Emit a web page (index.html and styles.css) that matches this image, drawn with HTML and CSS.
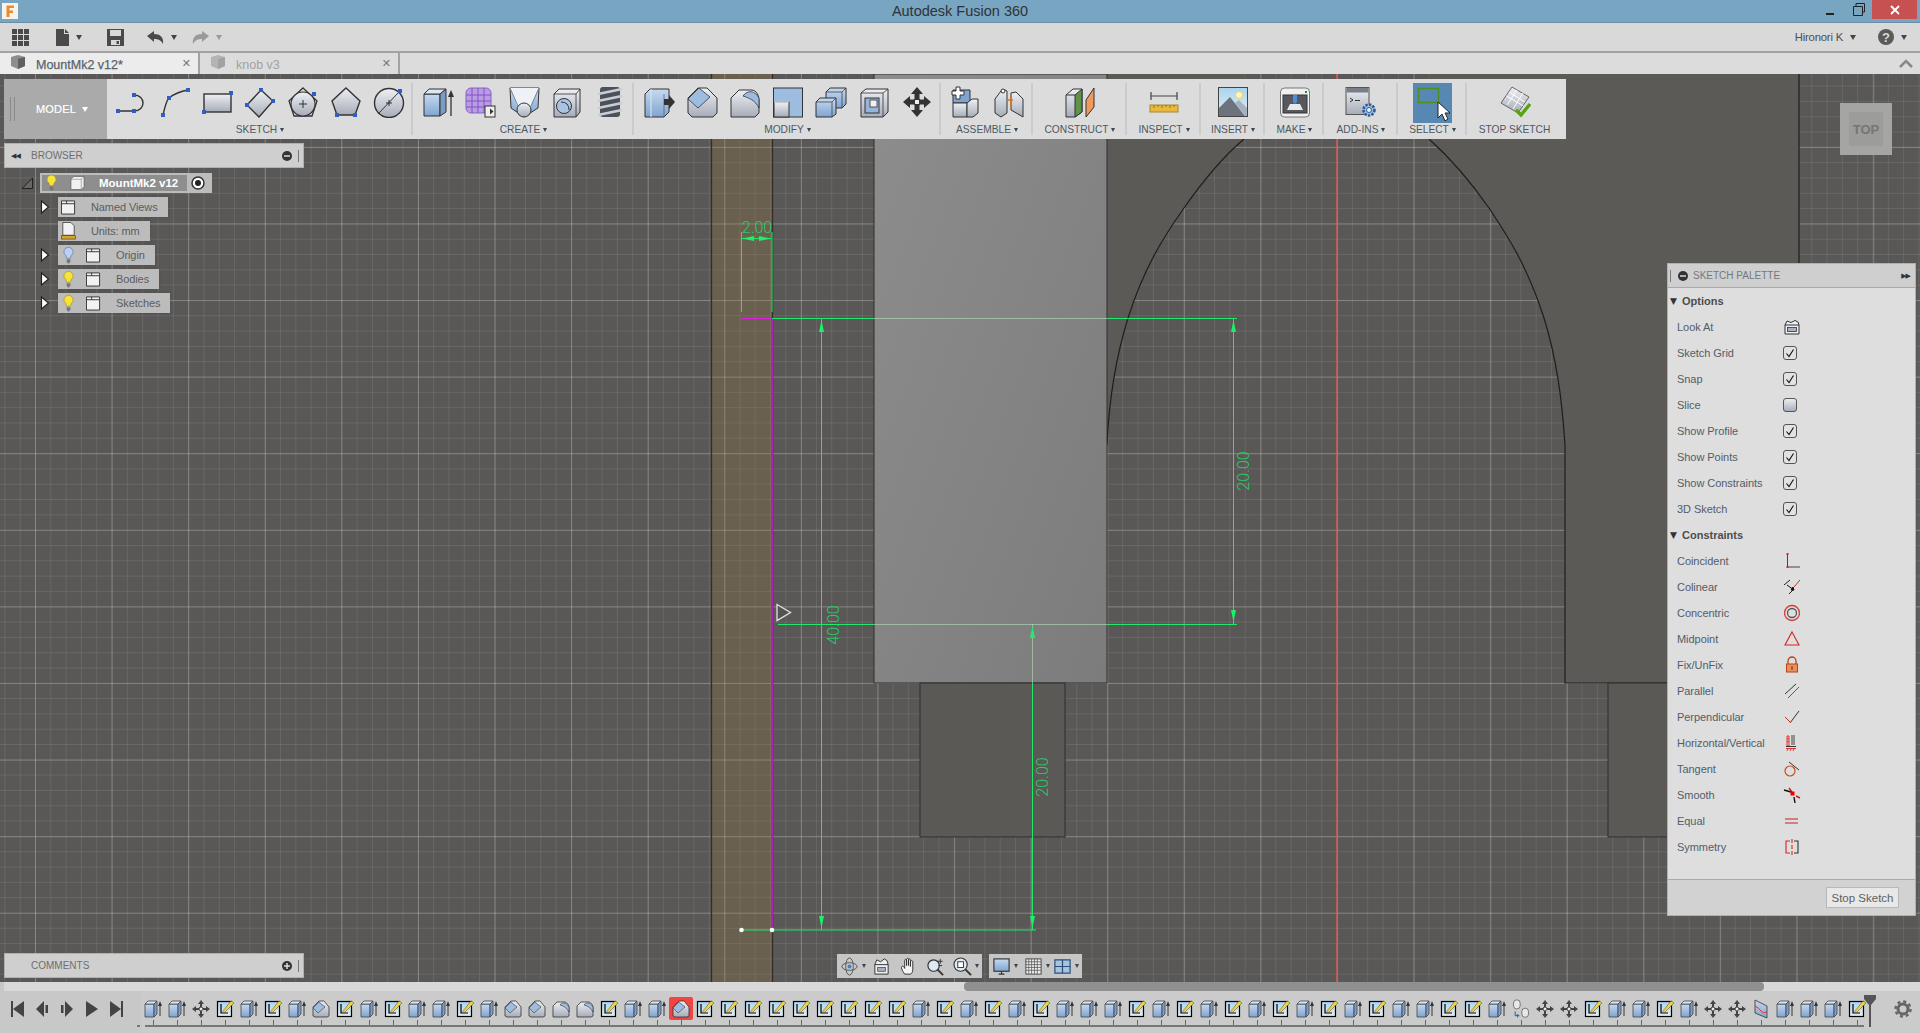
FILE: index.html
```html
<!DOCTYPE html>
<html lang="en">
<head>
<meta charset="utf-8">
<title>Autodesk Fusion 360</title>
<link rel="stylesheet" href="styles.css">
</head>
<body>
<svg class="sprite" xmlns="http://www.w3.org/2000/svg">
<defs>
<linearGradient id="gb" x1="0" y1="0" x2="0" y2="1"><stop offset="0" stop-color="#c6daf0"/><stop offset="1" stop-color="#7fa4d0"/></linearGradient>
<linearGradient id="gg" x1="0" y1="0" x2="0" y2="1"><stop offset="0" stop-color="#eef0f4"/><stop offset="1" stop-color="#a6acb8"/></linearGradient>
<linearGradient id="gd" x1="0" y1="0" x2="1" y2="1"><stop offset="0" stop-color="#8d8d8d"/><stop offset="1" stop-color="#7c7c7c"/></linearGradient>
<linearGradient id="gs" x1="0" y1="0" x2="0" y2="1"><stop offset="0" stop-color="#a9d4ee"/><stop offset="1" stop-color="#e6eef2"/></linearGradient>
<symbol id="i-line" viewBox="0 0 32 32"><path d="M3 25H19C31 25 31 9 19 9" fill="none" stroke="#333" stroke-width="1.4"/><path d="M1 23h4v4H1zM17 23h4v4h-4zM17 7h4v4h-4z" fill="#2f5ec4"/></symbol>
<symbol id="i-arc" viewBox="0 0 32 32"><path d="M5 29C7 20 9 14 11 12C16 8 24 5 30 4" fill="none" stroke="#333" stroke-width="1.4"/><path d="M3 27h4v4H3zM9 10h4v4H9zM28 2h4v4h-4z" fill="#2f5ec4"/></symbol>
<symbol id="i-rect" viewBox="0 0 32 32"><rect x="3" y="8" width="27" height="18" fill="url(#gg)" stroke="#333" stroke-width="1.4"/><path d="M28 5h4v4h-4zM1 24h4v4H1z" fill="#2f5ec4"/></symbol>
<symbol id="i-diamond" viewBox="0 0 32 32"><path d="M17 4L29 15L15 31L3 19Z" fill="url(#gg)" stroke="#333" stroke-width="1.4"/><path d="M15 2h4v4h-4zM27 13h4v4h-4zM1 17h4v4H1z" fill="#2f5ec4"/></symbol>
<symbol id="i-cpoly" viewBox="0 0 32 32"><path d="M16 2L30 15L25 30H7L2 15Z" fill="#dfe3e9" stroke="#333" stroke-width="1.3"/><circle cx="16" cy="18" r="12" fill="url(#gg)" stroke="#333" stroke-width="1.2"/><path d="M12 18h8M16 14v8" stroke="#333"/><path d="M25 6h4v4h-4z" fill="#2f5ec4"/></symbol>
<symbol id="i-pent" viewBox="0 0 32 32"><path d="M16 2L30 15L25 29H7L2 15Z" fill="url(#gg)" stroke="#333" stroke-width="1.4"/><path d="M5 27h4v4H5zM23 27h4v4h-4z" fill="#2f5ec4"/></symbol>
<symbol id="i-cdiam" viewBox="0 0 32 32"><circle cx="16" cy="17" r="14.5" fill="url(#gg)" stroke="#333" stroke-width="1.4"/><path d="M5 28L27 5M13 17h6M16 14v6" stroke="#333"/><path d="M25 3h4v4h-4z" fill="#2f5ec4"/></symbol>
<symbol id="i-ext" viewBox="0 0 32 32"><path d="M2 8H18V30H2Z" fill="url(#gb)" stroke="#333"/><path d="M2 8L7 3H24L18 8Z" fill="#dbe7f4" stroke="#333"/><path d="M18 8L24 3V26L18 30Z" fill="#7a9cc6" stroke="#333"/><path d="M29 30V8" stroke="#333" stroke-width="1.3"/><path d="M26 11L29 4L32 11Z" fill="#333"/></symbol>
<symbol id="i-mesh" viewBox="0 0 32 32"><rect x="1" y="2" width="25" height="25" rx="5" fill="#b99ce4" stroke="#8a62c8"/><path d="M7 2V27M13 2V27M19 2V27M1 9H26M1 15H26M1 21H26" stroke="#7b4fc0" stroke-width=".9"/><rect x="20" y="20" width="10" height="11" fill="#eee" stroke="#333"/><path d="M22 25.500h3v-3l3.500 3-3.500 3v-3h-3z" fill="#333"/></symbol>
<symbol id="i-loft" viewBox="0 0 32 32"><path d="M2 2H31L30 22L16 31L3 22Z" fill="url(#gb)" stroke="#333"/><path d="M2 2L9 20H23L31 2Z" fill="#eef2f6"/><path d="M2 2L10 20M31 2L23 20" stroke="#6d7f96"/><circle cx="16" cy="24" r="7" fill="url(#gg)" stroke="#333"/></symbol>
<symbol id="i-hole" viewBox="0 0 32 32"><path d="M3 8L8 3H29V26L25 31H3Z" fill="url(#gg)" stroke="#333"/><path d="M3 8H25V31M25 8L29 3" fill="none" stroke="#333" stroke-width=".8"/><circle cx="13" cy="20" r="7.500" fill="#a9c4e2" stroke="#333"/><path d="M10 16Q18 16 18 24" fill="none" stroke="#333"/></symbol>
<symbol id="i-thread" viewBox="0 0 32 32"><rect x="6" y="1" width="20" height="30" rx="3" fill="#4c5159"/><path d="M4 8L28 3M4 15L28 10M4 22L28 17M4 29L28 24" stroke="#c9ced6" stroke-width="2.600"/></symbol>
<symbol id="i-press" viewBox="0 0 32 32"><path d="M2 8L7 3H26V26L21 31H2Z" fill="url(#gb)" stroke="#333"/><path d="M8 3V31" stroke="#dfe9f5"/><path d="M21 8V31" stroke="#557" stroke-width=".7"/><path d="M21 13h5v-4l6 7-6 7v-4h-5z" fill="#333"/></symbol>
<symbol id="i-chamfer" viewBox="0 0 32 32"><path d="M2 12L12 2H21L31 12V27L27 31H6L2 27Z" fill="url(#gg)" stroke="#333"/><path d="M2 13L13 2L24 11L12 22Z" fill="#9dbde0" stroke="#333" stroke-width=".8"/></symbol>
<symbol id="i-fillet" viewBox="0 0 32 32"><path d="M2 12L10 4H22C28 4 30 10 30 15V27L26 31H2Z" fill="url(#gg)" stroke="#333"/><path d="M14 10C18 4 26 4 30 12V22C26 14 20 12 14 10Z" fill="#9dbde0" stroke="#333" stroke-width=".8"/></symbol>
<symbol id="i-combine" viewBox="0 0 32 32"><rect x="1.500" y="2" width="29" height="29" fill="#9dbde0" stroke="#333"/><rect x="2" y="16" width="15" height="15" fill="url(#gg)" stroke="#333"/><path d="M2 16H17" stroke="#fff"/></symbol>
<symbol id="i-offset" viewBox="0 0 32 32"><path d="M11 6L15 2H31V18L27 22H11Z" fill="url(#gb)" stroke="#333"/><path d="M1 16L5 12H21V28L17 31H1Z" fill="url(#gb)" stroke="#333"/><path d="M1 16H17V31M17 16L21 12M11 6H27V22M27 6L31 2" fill="none" stroke="#333" stroke-width=".7"/></symbol>
<symbol id="i-shell" viewBox="0 0 32 32"><path d="M3 7L8 3H30V26L25 31H3Z" fill="url(#gg)" stroke="#333"/><path d="M3 7H25V31M25 7L30 3" fill="none" stroke="#333" stroke-width=".8"/><rect x="7" y="12" width="14" height="15" fill="#95b5da" stroke="#333"/><rect x="12" y="14" width="7" height="7" fill="#eef0f4" stroke="#333" stroke-width=".8"/></symbol>
<symbol id="i-move" viewBox="0 0 32 32"><g fill="#333"><path d="M16 1l6 7h-3.500v5h-5V8H10zM16 31l6-7h-3.500v-5h-5v5H10zM2 16l7-6v3.500h4v5H9V22zM30 16l-7-6v3.500h-4v5h4V22z"/></g><rect x="13.500" y="13.500" width="5" height="5" fill="#eee" stroke="#333"/></symbol>
<symbol id="i-new" viewBox="0 0 32 32"><path d="M3 4H20V17H3Z" fill="#7fa4d0" stroke="#333"/><path d="M3 17H17V31H3Z" fill="url(#gg)" stroke="#333"/><path d="M17 17L22 13H28V27L23 31H17Z" fill="url(#gg)" stroke="#333"/><path d="M2 5h4V1h4v4h4v4h-4v4H6V9H2z" fill="#fff" stroke="#333"/></symbol>
<symbol id="i-joint" viewBox="0 0 32 32"><path d="M2 13L8 5Q11 2 14 5V27L8 31L2 27Z" fill="url(#gg)" stroke="#333"/><path d="M18 7L23 6L30 13V31L25 28L18 24Z" fill="url(#gg)" stroke="#333"/><circle cx="10" cy="5" r="2" fill="#fff" stroke="#333"/><path d="M18 9V22M14 14H20" stroke="#d9751e" stroke-width="1.400"/></symbol>
<symbol id="i-cons" viewBox="0 0 32 32"><path d="M2 9L9 3H18V26L11 31H2Z" fill="url(#gg)" stroke="#333"/><path d="M11 9V31L18 26V3Z" fill="#5f9348" stroke="#333"/><path d="M2 9H11" stroke="#333"/><path d="M22 14L30 2V21L22 31Z" fill="#ee9a5a" stroke="#333"/></symbol>
<symbol id="i-ruler" viewBox="0 0 32 32"><path d="M3 10H29M3 6V14M29 6V14" fill="none" stroke="#444" stroke-width="1.200"/><rect x="2" y="19" width="28" height="7" fill="#e8b93c" stroke="#a8862a"/><path d="M6 19v3M10 19v2M14 19v3M18 19v2M22 19v3M26 19v2" stroke="#7a5f1c" stroke-width=".8"/></symbol>
<symbol id="i-pic" viewBox="0 0 32 32"><rect x="1.500" y="1.500" width="29" height="29" fill="url(#gs)" stroke="#444"/><circle cx="22" cy="9" r="3.500" fill="#fff6b8" stroke="#e8d272"/><path d="M2 30V22L13 11L28 30Z" fill="#6c737e"/><path d="M18 17L22 14L30 22V30H28Z" fill="#a8b2bf"/></symbol>
<symbol id="i-make" viewBox="0 0 32 32"><rect x="1.500" y="2" width="29" height="29" rx="4" fill="#f0f0f0" stroke="#777"/><rect x="4" y="9" width="24" height="18" fill="#55595f" stroke="#333"/><path d="M8 24L11 18H21L24 24Z" fill="#e8e8e8"/><path d="M14 9h4v7l-2 2-2-2z" fill="#4a90e0"/><rect x="26" y="5" width="2" height="2" fill="#1b9a2b"/></symbol>
<symbol id="i-addin" viewBox="0 0 32 32"><rect x="1" y="1.500" width="23" height="27" fill="url(#gg)" stroke="#555"/><rect x="1.500" y="2" width="22" height="4.500" fill="#777f8a"/><path d="M5 12l3 2-3 2M10 14.500h5" fill="none" stroke="#333"/><circle cx="24" cy="24" r="5.500" fill="#9dbde0" stroke="#2d5a94" stroke-width="2.500" stroke-dasharray="2.400 1.200"/><circle cx="24" cy="24" r="2.500" fill="#eef3f8" stroke="#2d5a94"/></symbol>
<symbol id="i-sel" viewBox="0 0 40 40"><rect x="5.500" y="5.500" width="20" height="14" fill="none" stroke="#4f8f1a" stroke-width="1.500"/><path d="M25 19V35L29 31L32 38L35 36L32 30H37Z" fill="#fff" stroke="#222" stroke-width="1"/></symbol>
<symbol id="i-stop" viewBox="0 0 32 32"><path d="M13 1L30 11L19 27L2 17Z" fill="url(#gg)" stroke="#666"/><path d="M7.500 10L24.500 20M10 6L26 16M18 4L8 19M24 7L14 23" stroke="#fff" stroke-width="1"/><path d="M17 24L22 29L31 18" fill="none" stroke="#57a312" stroke-width="3.400"/></symbol>
<symbol id="b-on" viewBox="0 0 12 20"><path d="M6 1a5 5 0 0 1 3 9l-1 3H4l-1-3a5 5 0 0 1 3-9z" fill="#f7e33a" stroke="#9a8c30" stroke-width=".7"/><path d="M4 14h4v3l-2 2-2-2z" fill="#777"/></symbol>
<symbol id="b-off" viewBox="0 0 12 20"><path d="M6 1a5 5 0 0 1 3 9l-1 3H4l-1-3a5 5 0 0 1 3-9z" fill="#bcd0f4" stroke="#5a6f9a" stroke-width=".7"/><path d="M4 14h4v3l-2 2-2-2z" fill="#777"/></symbol>
<symbol id="f" viewBox="0 0 16 16"><path d="M.5 1.500h14v14H.5z" fill="#f2f2f2" stroke="#333"/><path d="M.5 4.500h14M6 1.500v3" stroke="#333"/></symbol>
<symbol id="exp" viewBox="0 0 10 14"><path d="M1.500 1L8.500 7L1.500 13Z" fill="#fff" stroke="#222" stroke-width="1.200"/></symbol>
<symbol id="chk" viewBox="0 0 14 14"><rect x=".5" y=".5" width="13" height="13" rx="2.500" fill="#e2e2e2" stroke="#555"/><path d="M3.500 7.500L6 10.500L10.500 3.500" fill="none" stroke="#111" stroke-width="1.100"/></symbol>
<symbol id="t-e" viewBox="0 0 20 20"><path d="M2 5H11V18H2Z" fill="url(#gb)" stroke="#444" stroke-width=".8"/><path d="M2 5L5 2H14L11 5Z" fill="#dbe7f4" stroke="#444" stroke-width=".8"/><path d="M11 5L14 2V15L11 18Z" fill="#7a9cc6" stroke="#444" stroke-width=".8"/><path d="M17 17V5" stroke="#333"/><path d="M15 7L17 2L19 7Z" fill="#333"/></symbol>
<symbol id="t-s" viewBox="0 0 20 20"><rect x="2.500" y="2.500" width="14" height="15" fill="url(#gs)" stroke="#000" stroke-width="1.200"/><path d="M6 5V14H13" fill="none" stroke="#000" stroke-width="1.200"/><path d="M8 12L16 2L19 4L10 13L7.500 14Z" fill="#f4d432" stroke="#444" stroke-width=".5"/></symbol>
<symbol id="t-m" viewBox="0 0 20 20"><path d="M10 1l3 4h-2v3H9V5H7zM10 19l3-4h-2v-3H9v3H7zM1 10l4-3v2h3v2H5v2zM19 10l-4-3v2h-3v2h3v2z" fill="#444"/><rect x="8.500" y="8.500" width="3" height="3" fill="#eee" stroke="#444" stroke-width=".7"/></symbol>
<symbol id="t-c" viewBox="0 0 20 20"><path d="M2 8L8 2H13L18 8V17L16 18H4L2 17Z" fill="url(#gg)" stroke="#333" stroke-width=".8"/><path d="M2 9L8 3L14 8L7 14Z" fill="#9dbde0" stroke="#333" stroke-width=".6"/></symbol>
<symbol id="t-f" viewBox="0 0 20 20"><path d="M2 7L6 3H13C16 3 18 6 18 9V17L16 18H2Z" fill="url(#gg)" stroke="#333" stroke-width=".8"/><path d="M9 6C11 3 15 3 18 8V13C16 9 13 7 9 6Z" fill="#9dbde0" stroke="#333" stroke-width=".6"/></symbol>
<symbol id="t-j" viewBox="0 0 20 24"><rect x="1" y="1" width="8" height="11" rx="4" fill="#e8e8e8" stroke="#444" stroke-width=".8"/><rect x="11" y="11" width="8" height="11" rx="4" fill="#e8e8e8" stroke="#444" stroke-width=".8"/><path d="M3 15v5h5M6 18v4" fill="none" stroke="#1e5fa8" stroke-width="1.200"/></symbol>
<symbol id="t-p" viewBox="0 0 20 20"><path d="M4 1L16 7V19L4 14Z" fill="url(#gb)" stroke="#333" stroke-width=".8"/><path d="M4 7Q8 9 10 12T16 13" fill="none" stroke="#d8382e" stroke-width="1"/></symbol>
</defs>
</svg>

<header class="titlebar">
  <svg class="logo" viewBox="0 0 16 16"><rect width="16" height="16" fill="#f6f3ec"/><path d="M4.500 2.500H12V5H7.500V7.500H11V10H7.500V14H4.500Z" fill="#e98b2a"/></svg>
  <div class="apptitle">Autodesk Fusion 360</div>
  <div class="winctl">
    <svg class="wbtn" viewBox="0 0 26 20"><path d="M6 14H14" stroke="#222" stroke-width="2"/></svg>
    <svg class="wbtn" viewBox="0 0 26 20"><path d="M7.500 6.500h9v9h-9z" fill="none" stroke="#222"/><path d="M10 6V3.500h8.500V12H16.500" fill="none" stroke="#222"/></svg>
    <div class="wclose"><svg class="wx" viewBox="0 0 10 10"><path d="M1 1L9 9M9 1L1 9" stroke="#fff" stroke-width="1.800"/></svg></div>
  </div>
</header>

<div class="menubar">
  <svg class="mi m-grid" viewBox="0 0 17 17"><path d="M0 0h5v5H0zM6 0h5v5H6zM12 0h5v5h-5zM0 6h5v5H0zM6 6h5v5H6zM12 6h5v5h-5zM0 12h5v5H0zM6 12h5v5H6zM12 12h5v5h-5z" fill="#4a4a4a"/></svg>
  <svg class="mi m-file" viewBox="0 0 14 17"><path d="M0 0H8V5H13V17H0ZM9 0L13 4H9Z" fill="#4a4a4a"/></svg>
  <span class="caret c-file"></span>
  <svg class="mi m-save" viewBox="0 0 17 17"><path d="M0 0H17V17H0Z" fill="#4a4a4a"/><path d="M3 1H14V7H3Z" fill="#d8d8d8"/><path d="M4 11H13V16H4Z" fill="#d8d8d8"/><path d="M9.500 12H12V15H9.500Z" fill="#4a4a4a"/></svg>
  <svg class="mi m-undo" viewBox="0 0 17 13"><path d="M0 5L7 0V3C13 3 17 6 16 13C14 9 11 8 7 8V11Z" fill="#4a4a4a"/></svg>
  <span class="caret c-undo"></span>
  <svg class="mi m-redo" viewBox="0 0 17 13"><path d="M17 5L10 0V3C4 3 0 6 1 13C3 9 6 8 10 8V11Z" fill="#9a9a9a"/></svg>
  <span class="caret faded c-redo"></span>
  <span class="user">Hironori K</span>
  <span class="caret c-user"></span>
  <svg class="mi m-help" viewBox="0 0 16 16"><circle cx="8" cy="8" r="8" fill="#5a5a5a"/><text x="8" y="12.500" class="helpq">?</text></svg>
  <span class="caret c-help"></span>
</div>

<nav class="tabs">
  <div class="tab active">
    <svg class="tabcube" viewBox="0 0 16 16"><path d="M1 3L8 1L15 3V12L8 15L1 12Z" fill="#8d8d8d"/><path d="M8 5V15L15 12V3Z" fill="#5f5f5f"/></svg>
    <span class="tablabel">MountMk2 v12*</span>
    <span class="tabx">✕</span>
  </div>
  <div class="tab inactive">
    <svg class="tabcube" viewBox="0 0 16 16"><path d="M1 3L8 1L15 3V12L8 15L1 12Z" fill="#b4b4b4"/><path d="M8 5V15L15 12V3Z" fill="#a2a2a2"/></svg>
    <span class="tablabel">knob v3</span>
    <span class="tabx">✕</span>
  </div>
  <div class="tabrest"><svg class="chev" viewBox="0 0 14 9"><path d="M1 8L7 2L13 8" fill="none" stroke="#888" stroke-width="2.600"/></svg></div>
</nav>

<main class="canvas">
  <svg class="scene" viewBox="0 74 1920 908">
    <rect x="711" y="74" width="61" height="908" fill="#a07840" fill-opacity=".24"/>
    <path d="M711.500 74V982M772.500 74V982" stroke="#352f28" stroke-width="1.300"/>
    <path d="M1336.500 74V982" stroke="#b85a5a"/>
    <path d="M1107 74V445C1109 400 1115 360 1128 318C1145 265 1165 235 1184 208C1205 178 1225 155 1244 139V74H1429V139C1447 155 1468 178 1489 208C1507 235 1527 265 1544 318C1557 360 1562 400 1565 445V683H1799V74Z" fill="#5b5a57"/>
    <path d="M1107 445C1109 400 1115 360 1128 318C1145 265 1165 235 1184 208C1205 178 1225 155 1244 139M1429 139C1447 155 1468 178 1489 208C1507 235 1527 265 1544 318C1557 360 1562 400 1565 445V683H1799V74" fill="none" stroke="#1e1e1e" stroke-width="1.200"/>
    <rect x="874" y="74" width="233" height="609" fill="url(#gd)" stroke="#2e2e2e"/>
    <rect x="920" y="683" width="145" height="154" fill="#5a5956" stroke="#2e2e2e"/>
    <rect x="1608" y="683" width="70" height="154" fill="#5a5956" stroke="#2e2e2e"/>

    <path d="M741.500 318V930" stroke="#d020d0" stroke-opacity=".4"/>
    <path d="M741 318.500H772" stroke="#e020e0" stroke-width="1.300"/>
    <path d="M772 318V930" stroke="#b020b8" stroke-width="2"/>

    <g class="dim">
      <path d="M741.500 232V312M772 232V312"/>
      <path d="M742 238.500H771"/>
      <path d="M772 318.500H874M1107 318.500H1237M778 624.500H874M1107 624.500H1237"/>
      <path d="M821.500 318V930M1233.500 318V624"/>
      <path d="M1032.500 683V930M741 930H1036"/>
    </g>
    <path class="dimfade" d="M874 318.500H1107M874 624.500H1107M1032.500 624V683"/>
    <g class="arrow">
      <path d="M742 238.500L754 236V241ZM771 238.500L759 236V241Z"/>
      <path d="M821.500 320L819 332H824ZM821.500 928L819 916H824Z"/>
      <path d="M1233.500 320L1231 332H1236ZM1233.500 622L1231 610H1236Z"/>
      <path d="M1032.500 626L1030 638H1035ZM1032.500 928L1030 916H1035Z"/>
    </g>
    <circle cx="741.500" cy="930" r="2.300" fill="#fff"/><circle cx="772" cy="930" r="2.300" fill="#fff"/>
    <path d="M777 604.500L790.500 612.500L777 620.500Z" fill="#55534f" stroke="#e4e4e4" stroke-width="1.300"/>
    <text class="dimtext" x="757" y="233">2.00</text>
    <text class="dimtext" transform="translate(1249 471) rotate(-90)" x="0" y="0">20.00</text>
    <text class="dimtext" transform="translate(839 625) rotate(-90)" x="0" y="0">40.00</text>
    <text class="dimtext" transform="translate(1048 777) rotate(-90)" x="0" y="0">20.00</text>
  </svg>

  <section class="toolbar">
    <div class="modelbtn"><span class="grip"></span><span class="modeltxt">MODEL</span><span class="caret white"></span></div>
    <div class="tg w-sketch"><div class="ticons"><svg class="ic"><use href="#i-line"/></svg><svg class="ic"><use href="#i-arc"/></svg><svg class="ic"><use href="#i-rect"/></svg><svg class="ic"><use href="#i-diamond"/></svg><svg class="ic"><use href="#i-cpoly"/></svg><svg class="ic"><use href="#i-pent"/></svg><svg class="ic"><use href="#i-cdiam"/></svg></div><div class="tlabel">SKETCH<span class="caret sm"></span></div></div>
    <div class="tg w-create"><div class="ticons"><svg class="ic"><use href="#i-ext"/></svg><svg class="ic"><use href="#i-mesh"/></svg><svg class="ic"><use href="#i-loft"/></svg><svg class="ic"><use href="#i-hole"/></svg><svg class="ic"><use href="#i-thread"/></svg></div><div class="tlabel">CREATE<span class="caret sm"></span></div></div>
    <div class="tg w-modify"><div class="ticons"><svg class="ic"><use href="#i-press"/></svg><svg class="ic"><use href="#i-chamfer"/></svg><svg class="ic"><use href="#i-fillet"/></svg><svg class="ic"><use href="#i-combine"/></svg><svg class="ic"><use href="#i-offset"/></svg><svg class="ic"><use href="#i-shell"/></svg><svg class="ic"><use href="#i-move"/></svg></div><div class="tlabel">MODIFY<span class="caret sm"></span></div></div>
    <div class="tg w-assemble"><div class="ticons"><svg class="ic"><use href="#i-new"/></svg><svg class="ic"><use href="#i-joint"/></svg></div><div class="tlabel">ASSEMBLE<span class="caret sm"></span></div></div>
    <div class="tg w-construct"><div class="ticons"><svg class="ic"><use href="#i-cons"/></svg></div><div class="tlabel">CONSTRUCT<span class="caret sm"></span></div></div>
    <div class="tg w-inspect"><div class="ticons"><svg class="ic"><use href="#i-ruler"/></svg></div><div class="tlabel">INSPECT<span class="caret sm"></span></div></div>
    <div class="tg w-insert"><div class="ticons"><svg class="ic"><use href="#i-pic"/></svg></div><div class="tlabel">INSERT<span class="caret sm"></span></div></div>
    <div class="tg w-make"><div class="ticons"><svg class="ic"><use href="#i-make"/></svg></div><div class="tlabel">MAKE<span class="caret sm"></span></div></div>
    <div class="tg w-addins"><div class="ticons"><svg class="ic"><use href="#i-addin"/></svg></div><div class="tlabel">ADD-INS<span class="caret sm"></span></div></div>
    <div class="tg w-select"><div class="ticons"><div class="selbtn"><svg class="selic"><use href="#i-sel"/></svg></div></div><div class="tlabel">SELECT<span class="caret sm"></span></div></div>
    <div class="tg w-stop"><div class="ticons"><svg class="ic"><use href="#i-stop"/></svg></div><div class="tlabel">STOP SKETCH</div></div>
  </section>

  <section class="panel browser">
    <span class="rew">◀◀</span><span class="ptitle">BROWSER</span>
    <svg class="pm" viewBox="0 0 10 10"><circle cx="5" cy="5" r="5" fill="#333"/><path d="M2 5H8" stroke="#ddd" stroke-width="1.500"/></svg><span class="vgrip"></span>
  </section>

  <section class="tree">
    <div class="row rootrow">
      <svg class="rootexp" viewBox="0 0 12 12"><path d="M11.500 1V11.500H1Z" fill="#666" stroke="#222"/></svg>
      <div class="rootnode">
        <div class="rootinner">
          <svg class="bulb"><use href="#b-on"/></svg>
          <svg class="cube" viewBox="0 0 16 16"><path d="M1 4L4 1H15V12L12 15H1Z" fill="#f1f1f1" stroke="#555" stroke-width=".7"/><path d="M1 4H12V15M12 4L15 1" fill="none" stroke="#888" stroke-width=".7"/></svg>
          <span class="rootname">MountMk2 v12</span>
        </div>
        <svg class="radio" viewBox="0 0 14 14"><circle cx="7" cy="7" r="6" fill="#fff" stroke="#333" stroke-width="1.500"/><circle cx="7" cy="7" r="3" fill="#222"/></svg>
      </div>
    </div>
    <div class="row"><svg class="exp"><use href="#exp"/></svg><div class="node"><svg class="fold nv"><use href="#f"/></svg><span>Named Views</span></div></div>
    <div class="row"><span class="exp"></span><div class="node"><svg class="doc" viewBox="0 0 15 19"><path d="M1.500 .5H10L13.500 4V14H1.500Z" fill="#f2f2f2" stroke="#333" stroke-width=".8"/><rect x="0" y="14.500" width="15" height="3.500" fill="#d9a52a" stroke="#333" stroke-width=".6"/></svg><span>Units: mm</span></div></div>
    <div class="row"><svg class="exp"><use href="#exp"/></svg><div class="node bn"><svg class="bulb"><use href="#b-off"/></svg><svg class="fold"><use href="#f"/></svg><span>Origin</span></div></div>
    <div class="row"><svg class="exp"><use href="#exp"/></svg><div class="node bn"><svg class="bulb"><use href="#b-on"/></svg><svg class="fold"><use href="#f"/></svg><span>Bodies</span></div></div>
    <div class="row"><svg class="exp"><use href="#exp"/></svg><div class="node bn"><svg class="bulb"><use href="#b-on"/></svg><svg class="fold"><use href="#f"/></svg><span>Sketches</span></div></div>
  </section>

  <section class="panel comments">
    <span class="ptitle">COMMENTS</span>
    <svg class="pm" viewBox="0 0 10 10"><circle cx="5" cy="5" r="5" fill="#333"/><path d="M2 5H8M5 2V8" stroke="#ddd" stroke-width="1.500"/></svg><span class="vgrip"></span>
  </section>

  <div class="navbar">
    <div class="navgroup ng1">
      <svg class="nv-i" viewBox="0 0 20 20"><ellipse cx="10" cy="10" rx="8" ry="4" fill="none" stroke="#555"/><ellipse cx="10" cy="10" rx="4" ry="9" fill="none" stroke="#555"/><circle cx="10" cy="10" r="2" fill="#3d7fd0"/></svg><span class="caret sm"></span>
      <svg class="nv-i gapf" viewBox="0 0 20 20"><path d="M3 8H17V18H3ZM3 8L5 3L9 5L13 2L16 4L17 8" fill="#eee" stroke="#333"/><rect x="6" y="11" width="8" height="4" fill="#a6b2c4" stroke="#333" stroke-width=".7"/></svg>
      <svg class="nv-i gapl" viewBox="0 0 20 20"><path d="M6 18C3 14 2 11 3 10C4 9 5 10 6 12V4C6 2 8 2 8 4V9V2.500C8 1 10 1 10 2.500V9V3C10 1.500 12 1.500 12 3V10V5C12 3.500 14.500 3.500 14.500 5V13C14.500 16 13 18 12 18Z" fill="#f4f4f4" stroke="#333"/></svg>
      <svg class="nv-i gapl" viewBox="0 0 20 20"><circle cx="8" cy="9" r="6" fill="#dfe9f4" stroke="#333" stroke-width="1.200"/><path d="M12 13L18 19" stroke="#333" stroke-width="2"/><path d="M15 2v5M12.500 4.500h5M13 9h4" stroke="#333"/></svg>
      <svg class="nv-i gapl" viewBox="0 0 20 20"><circle cx="8" cy="8" r="7" fill="#dfe9f4" stroke="#333" stroke-width="1.200"/><rect x="5" y="5" width="6" height="6" fill="#fff" stroke="#333"/><path d="M13 13L19 19" stroke="#333" stroke-width="2"/></svg><span class="caret sm"></span>
    </div>
    <div class="navgroup ng2">
      <svg class="nv-i" viewBox="0 0 20 20"><rect x="2" y="2" width="16" height="13" fill="url(#gb)" stroke="#333" stroke-width="1.200"/><path d="M7 18H13M10 15V18" stroke="#333" stroke-width="1.200"/></svg><span class="caret sm"></span>
      <svg class="nv-i gapm" viewBox="0 0 20 20"><rect x="2" y="2" width="16" height="16" fill="#eee" stroke="#444"/><path d="M5 2V18M8 2V18M11 2V18M14 2V18M2 5H18M2 8H18M2 11H18M2 14H18" stroke="#555" stroke-width=".8"/></svg><span class="caret sm"></span>
      <svg class="nv-i gaps" viewBox="0 0 20 20"><path d="M2 3H18V17H2Z" fill="#a6c3e2" stroke="#2f4f7a" stroke-width="1.300"/><path d="M10 3V17M2 10H18" stroke="#2f4f7a" stroke-width="1.300"/></svg><span class="caret sm"></span>
    </div>
  </div>

  <aside class="viewcube"><div class="vcface">TOP</div></aside>

  <aside class="palette">
    <div class="phead"><span class="vgrip"></span><svg class="pm2" viewBox="0 0 10 10"><circle cx="5" cy="5" r="5" fill="#333"/><path d="M2 5H8" stroke="#ddd" stroke-width="1.500"/></svg><span class="ptitle2">SKETCH PALETTE</span><span class="ff">▶▶</span></div>
    <div class="pbody">
      <div class="psec"><span class="tri">▼</span>Options</div>
      <div class="prow"><span class="plabel">Look At</span><svg class="pic" viewBox="0 0 18 18"><path d="M2 7H16V16H2ZM2 7L4 3L8 4.500L12 2.500L15 4L16 7" fill="#eee" stroke="#333"/><rect x="4.500" y="9.500" width="9" height="4" fill="#a6b2c4" stroke="#333" stroke-width=".8"/></svg></div>
      <div class="prow"><span class="plabel">Sketch Grid</span><svg class="pchk"><use href="#chk"/></svg></div>
      <div class="prow"><span class="plabel">Snap</span><svg class="pchk"><use href="#chk"/></svg></div>
      <div class="prow"><span class="plabel">Slice</span><svg class="pchk" viewBox="0 0 14 14"><rect x=".5" y=".5" width="13" height="13" rx="2.500" fill="url(#gg)" stroke="#555"/></svg></div>
      <div class="prow"><span class="plabel">Show Profile</span><svg class="pchk"><use href="#chk"/></svg></div>
      <div class="prow"><span class="plabel">Show Points</span><svg class="pchk"><use href="#chk"/></svg></div>
      <div class="prow"><span class="plabel">Show Constraints</span><svg class="pchk"><use href="#chk"/></svg></div>
      <div class="prow"><span class="plabel">3D Sketch</span><svg class="pchk"><use href="#chk"/></svg></div>
      <div class="psec"><span class="tri">▼</span>Constraints</div>
      <div class="prow"><span class="plabel">Coincident</span><svg class="pic" viewBox="0 0 18 18"><path d="M4.500 1V15M4.500 15H17" stroke="#333" stroke-width=".9" fill="none"/><rect x="3.500" y="1" width="2" height="2" fill="#d22"/><rect x="3.500" y="14" width="2" height="2" fill="#d22"/></svg></div>
      <div class="prow"><span class="plabel">Colinear</span><svg class="pic" viewBox="0 0 18 18"><path d="M1 7L7 2M6 16L11 11" stroke="#222" fill="none"/><path d="M11 9L17 2" stroke="#c0391b"/><path d="M4 7L11 12M11 12L8 12L10 9Z" stroke="#111" fill="#111"/></svg></div>
      <div class="prow"><span class="plabel">Concentric</span><svg class="pic" viewBox="0 0 18 18"><circle cx="9" cy="9" r="7.500" fill="none" stroke="#d23b3b" stroke-width="1.300"/><circle cx="9" cy="9" r="4.500" fill="none" stroke="#555" stroke-width="1.300"/></svg></div>
      <div class="prow"><span class="plabel">Midpoint</span><svg class="pic" viewBox="0 0 18 18"><path d="M9 2L16 15H2Z" fill="none" stroke="#d22626" stroke-width="1.100"/></svg></div>
      <div class="prow"><span class="plabel">Fix/UnFix</span><svg class="pic" viewBox="0 0 18 18"><path d="M5 8V5a4 4 0 0 1 8 0V8" fill="none" stroke="#b8461a" stroke-width="1.300"/><rect x="3.500" y="8" width="11" height="8" fill="#e98f5a" stroke="#b8461a"/><path d="M9 10.500V13.500" stroke="#7a2e10" stroke-width="1.300"/></svg></div>
      <div class="prow"><span class="plabel">Parallel</span><svg class="pic" viewBox="0 0 18 18"><path d="M2 12L13 2" stroke="#333"/><path d="M5 16L16 5" stroke="#c0391b"/></svg></div>
      <div class="prow"><span class="plabel">Perpendicular</span><svg class="pic" viewBox="0 0 18 18"><path d="M7 15L16 3" stroke="#333"/><path d="M2 9L8 15" stroke="#c0391b"/></svg></div>
      <div class="prow"><span class="plabel">Horizontal/Vertical</span><svg class="pic" viewBox="0 0 18 18"><path d="M4 2H6V12H4ZM4 4L6 5.500M4 7L6 8.500" fill="none" stroke="#d22" stroke-width=".9"/><path d="M9 1V11M11 1V11" stroke="#333" stroke-width=".9"/><path d="M3 12.500H13" stroke="#333"/><path d="M3 14.500H13M4 17L5 15M7 17L8 15M10 17L11 15" stroke="#d22" fill="none" stroke-width=".9"/></svg></div>
      <div class="prow"><span class="plabel">Tangent</span><svg class="pic" viewBox="0 0 18 18"><circle cx="7" cy="11" r="5" fill="none" stroke="#c0501f" stroke-width="1.200"/><path d="M6 2L16 10" stroke="#333"/></svg></div>
      <div class="prow"><span class="plabel">Smooth</span><svg class="pic" viewBox="0 0 18 18"><path d="M1 4L8 6M11 11L12 17" stroke="#111" stroke-width="1.400"/><path d="M6 2L9 6M13 10L17 12" stroke="#c02222" stroke-width="1.400"/><rect x="7.500" y="5.500" width="4" height="4" fill="#e00"/></svg></div>
      <div class="prow"><span class="plabel">Equal</span><svg class="pic" viewBox="0 0 18 18"><path d="M2 7H15M2 11H15" stroke="#c02222"/></svg></div>
      <div class="prow"><span class="plabel">Symmetry</span><svg class="pic" viewBox="0 0 18 18"><path d="M7 3H3V15H7" fill="none" stroke="#d22" stroke-width="1.100"/><path d="M11 3H15V15H11" fill="none" stroke="#333" stroke-width="1.100"/><path d="M9 1V5M9 7V11M9 13V17" stroke="#d22" stroke-width="1.100"/></svg></div>
    </div>
    <div class="pfoot"><button class="stopbtn">Stop Sketch</button></div>
  </aside>
</main>

<div class="scrollstrip"><div class="thumb"></div></div>

<footer class="timeline">
  <div class="controls">
    <svg class="pc" viewBox="0 0 14 16"><path d="M1 0V16H3V0ZM14 0L3 8L14 16Z" fill="#444"/></svg>
    <svg class="pc" viewBox="0 0 14 16"><path d="M1 8L9 0V16ZM10.500 4H13V12H10.500Z" fill="#444"/></svg>
    <svg class="pc" viewBox="0 0 14 16"><path d="M13 8L5 0V16ZM1 4H3.500V12H1Z" fill="#444"/></svg>
    <svg class="pc" viewBox="0 0 14 16"><path d="M1 0L13 8L1 16Z" fill="#444"/></svg>
    <svg class="pc" viewBox="0 0 14 16"><path d="M13 0V16H11V0ZM0 0L11 8L0 16Z" fill="#444"/></svg>
  </div>
  <div class="track">
    <span class="dash"></span>
    <div class="t"><svg class="ti"><use href="#t-e"/></svg></div>
    <div class="t"><svg class="ti"><use href="#t-e"/></svg></div>
    <div class="t"><svg class="ti"><use href="#t-m"/></svg></div>
    <div class="t"><svg class="ti"><use href="#t-s"/></svg></div>
    <div class="t"><svg class="ti"><use href="#t-e"/></svg></div>
    <div class="t"><svg class="ti"><use href="#t-s"/></svg></div>
    <div class="t"><svg class="ti"><use href="#t-e"/></svg></div>
    <div class="t"><svg class="ti"><use href="#t-c"/></svg></div>
    <div class="t"><svg class="ti"><use href="#t-s"/></svg></div>
    <div class="t"><svg class="ti"><use href="#t-e"/></svg></div>
    <div class="t"><svg class="ti"><use href="#t-s"/></svg></div>
    <div class="t"><svg class="ti"><use href="#t-e"/></svg></div>
    <div class="t"><svg class="ti"><use href="#t-e"/></svg></div>
    <div class="t"><svg class="ti"><use href="#t-s"/></svg></div>
    <div class="t"><svg class="ti"><use href="#t-e"/></svg></div>
    <div class="t"><svg class="ti"><use href="#t-c"/></svg></div>
    <div class="t"><svg class="ti"><use href="#t-c"/></svg></div>
    <div class="t"><svg class="ti"><use href="#t-f"/></svg></div>
    <div class="t"><svg class="ti"><use href="#t-f"/></svg></div>
    <div class="t"><svg class="ti"><use href="#t-s"/></svg></div>
    <div class="t"><svg class="ti"><use href="#t-e"/></svg></div>
    <div class="t"><svg class="ti"><use href="#t-e"/></svg></div>
    <div class="t current"><svg class="ti"><use href="#t-c"/></svg></div>
    <div class="t"><svg class="ti"><use href="#t-s"/></svg></div>
    <div class="t"><svg class="ti"><use href="#t-s"/></svg></div>
    <div class="t"><svg class="ti"><use href="#t-s"/></svg></div>
    <div class="t"><svg class="ti"><use href="#t-s"/></svg></div>
    <div class="t"><svg class="ti"><use href="#t-s"/></svg></div>
    <div class="t"><svg class="ti"><use href="#t-s"/></svg></div>
    <div class="t"><svg class="ti"><use href="#t-s"/></svg></div>
    <div class="t"><svg class="ti"><use href="#t-s"/></svg></div>
    <div class="t"><svg class="ti"><use href="#t-s"/></svg></div>
    <div class="t"><svg class="ti"><use href="#t-e"/></svg></div>
    <div class="t"><svg class="ti"><use href="#t-s"/></svg></div>
    <div class="t"><svg class="ti"><use href="#t-e"/></svg></div>
    <div class="t"><svg class="ti"><use href="#t-s"/></svg></div>
    <div class="t"><svg class="ti"><use href="#t-e"/></svg></div>
    <div class="t"><svg class="ti"><use href="#t-s"/></svg></div>
    <div class="t"><svg class="ti"><use href="#t-e"/></svg></div>
    <div class="t"><svg class="ti"><use href="#t-e"/></svg></div>
    <div class="t"><svg class="ti"><use href="#t-e"/></svg></div>
    <div class="t"><svg class="ti"><use href="#t-s"/></svg></div>
    <div class="t"><svg class="ti"><use href="#t-e"/></svg></div>
    <div class="t"><svg class="ti"><use href="#t-s"/></svg></div>
    <div class="t"><svg class="ti"><use href="#t-e"/></svg></div>
    <div class="t"><svg class="ti"><use href="#t-s"/></svg></div>
    <div class="t"><svg class="ti"><use href="#t-e"/></svg></div>
    <div class="t"><svg class="ti"><use href="#t-s"/></svg></div>
    <div class="t"><svg class="ti"><use href="#t-e"/></svg></div>
    <div class="t"><svg class="ti"><use href="#t-s"/></svg></div>
    <div class="t"><svg class="ti"><use href="#t-e"/></svg></div>
    <div class="t"><svg class="ti"><use href="#t-s"/></svg></div>
    <div class="t"><svg class="ti"><use href="#t-e"/></svg></div>
    <div class="t"><svg class="ti"><use href="#t-e"/></svg></div>
    <div class="t"><svg class="ti"><use href="#t-s"/></svg></div>
    <div class="t"><svg class="ti"><use href="#t-s"/></svg></div>
    <div class="t"><svg class="ti"><use href="#t-e"/></svg></div>
    <div class="t"><svg class="ti"><use href="#t-j"/></svg></div>
    <div class="t"><svg class="ti"><use href="#t-m"/></svg></div>
    <div class="t"><svg class="ti"><use href="#t-m"/></svg></div>
    <div class="t"><svg class="ti"><use href="#t-s"/></svg></div>
    <div class="t"><svg class="ti"><use href="#t-e"/></svg></div>
    <div class="t"><svg class="ti"><use href="#t-e"/></svg></div>
    <div class="t"><svg class="ti"><use href="#t-s"/></svg></div>
    <div class="t"><svg class="ti"><use href="#t-e"/></svg></div>
    <div class="t"><svg class="ti"><use href="#t-m"/></svg></div>
    <div class="t"><svg class="ti"><use href="#t-m"/></svg></div>
    <div class="t"><svg class="ti"><use href="#t-p"/></svg></div>
    <div class="t"><svg class="ti"><use href="#t-e"/></svg></div>
    <div class="t"><svg class="ti"><use href="#t-e"/></svg></div>
    <div class="t"><svg class="ti"><use href="#t-e"/></svg></div>
    <div class="t"><svg class="ti"><use href="#t-s"/></svg></div>
    <svg class="marker" viewBox="0 0 14 32"><path d="M1 0H13V4L8 10V32H6V10L1 4Z" fill="#555"/></svg>
  </div>
  <svg class="gear" viewBox="0 0 18 18"><circle cx="9" cy="9" r="5" fill="none" stroke="#666" stroke-width="3"/><circle cx="9" cy="9" r="7.500" fill="none" stroke="#666" stroke-width="2.500" stroke-dasharray="3 2.890"/></svg>
</footer>
</body>
</html>
```
FILE: styles.css
```css
* { box-sizing: border-box; }
html, body { margin: 0; padding: 0; }
body {
  width: 1920px; height: 1033px; overflow: hidden;
  display: flex; flex-direction: column;
  font-family: "Liberation Sans", Arial, sans-serif;
  background: #595957;
}
.sprite { position: absolute; width: 0; height: 0; }
svg { display: block; flex: none; overflow: visible; }

.caret { display: inline-block; flex: none; width: 0; height: 0; border-left: 3.500px solid transparent; border-right: 3.500px solid transparent; border-top: 5px solid #444; }
.caret.faded { border-top-color: #9a9a9a; }
.caret.white { border-top-color: #fff; margin-left: 6px; }
.caret.sm { border-left-width: 2.500px; border-right-width: 2.500px; border-top-width: 4px; margin-left: 3px; border-top-color: #3c4650; }

.titlebar { height: 23px; flex: none; display: flex; align-items: flex-start; background: #78a5c2; border-bottom: 1px solid #6a8ea6; position: relative; }
.logo { width: 16px; height: 16px; margin: 3px 0 0 2px; }
.apptitle { position: absolute; left: 0; right: 0; top: 3px; text-align: center; font-size: 14.500px; line-height: 16px; color: #2e3338; }
.winctl { margin-left: auto; display: flex; align-items: flex-start; padding-right: 3px; }
.wbtn { width: 26px; height: 20px; }
.wclose { width: 45px; height: 19px; background: #c75050; display: flex; align-items: center; justify-content: center; }
.wx { width: 10px; height: 10px; }

.menubar { height: 28px; flex: none; display: flex; align-items: center; background: #d9d9d9; }
.m-grid { width: 17px; height: 17px; margin-left: 12px; }
.m-file { width: 14px; height: 17px; margin-left: 27px; }
.c-file { margin-left: 6px; }
.m-save { width: 17px; height: 17px; margin-left: 25px; }
.m-undo { width: 17px; height: 13px; margin-left: 23px; }
.c-undo { margin-left: 7px; }
.m-redo { width: 17px; height: 13px; margin-left: 15px; }
.c-redo { margin-left: 7px; }
.user { margin-left: auto; font-size: 11.300px; color: #4a4f55; letter-spacing: -.2px; }
.c-user { margin-left: 7px; }
.m-help { width: 16px; height: 16px; margin-left: 22px; }
.helpq { font: bold 13px "Liberation Sans", sans-serif; fill: #d9d9d9; text-anchor: middle; }
.c-help { margin: 0 13px 0 7px; }

.tabs { height: 23px; flex: none; display: flex; border-top: 2px solid #a2a2a2; background: #dcdcdc; }
.tab { width: 200px; height: 21px; display: flex; align-items: center; border-right: 2px solid #a2a2a2; padding-left: 10px; font-size: 12.500px; }
.tab.active { background: #ececec; color: #5b636b; }
.tab.inactive { color: #a3a3a3; }
.tabcube { width: 16px; height: 16px; margin-top: -3px; }
.tablabel { margin-left: 10px; margin-top: 3px; }
.tab.active .tablabel { -webkit-text-stroke: .25px #5b636b; }
.tabx { margin-left: auto; margin-right: 7px; font-size: 11px; font-weight: bold; color: #777; font-family: "DejaVu Sans", sans-serif; }
.tabrest { flex: 1; display: flex; align-items: center; justify-content: flex-end; padding-right: 7px; }
.chev { width: 14px; height: 9px; }

.canvas {
  height: 908px; flex: none; position: relative; overflow: hidden;
  background-color: #595856;
  background-image:
    linear-gradient(to right, rgba(255,255,255,.21) 1px, transparent 1px),
    linear-gradient(to bottom, rgba(255,255,255,.2) 1px, transparent 1px),
    linear-gradient(to right, rgba(255,255,255,.09) 1px, transparent 1px),
    linear-gradient(to bottom, rgba(255,255,255,.09) 1px, transparent 1px);
  background-size: 76.6px 100%, 100% 76.6px, 15.32px 100%, 100% 15.32px;
  background-position: 35px 0, 0 72.9px, 4.4px 0, 0 11.6px;
}
.scene { position: absolute; left: 0; top: 0; width: 1920px; height: 908px; }
.dim { stroke: #22e86a; stroke-width: 1; fill: none; }
.dimfade { stroke: #b6e8c4; stroke-opacity: .55; fill: none; }
.arrow { fill: #1cf06a; }
.dimtext { font: 300 16px Roboto, "Liberation Sans", sans-serif; fill: #2ec866; text-anchor: middle; }

.toolbar { position: absolute; left: 4px; top: 5px; width: 1562px; height: 60px; display: flex; background: #dcdcdc; }
.modelbtn { width: 103px; height: 60px; flex: none; background: #aaaaaa; display: flex; align-items: center; position: relative; padding-left: 32px; font-size: 11px; color: #fff; }
.grip { position: absolute; left: 6px; top: 18px; width: 5px; height: 24px; border-left: 1px solid #8a8a8a; border-right: 1px solid #8a8a8a; }
.modeltxt { letter-spacing: .2px; -webkit-text-stroke: .2px #fff; }
.tg { flex: none; height: 60px; display: flex; flex-direction: column; align-items: center; position: relative; }
.tg::after { content: ""; position: absolute; right: 0; top: 4px; bottom: 4px; width: 2px; background: #cbcbcb; }
.ticons { height: 45px; padding-top: 7px; display: flex; justify-content: center; }
.ic { width: 32px; height: 32px; margin: 0 5.500px; }
.tlabel { height: 12px; margin-top: 0; display: flex; align-items: center; font-size: 10.200px; line-height: 12px; color: #4c5866; white-space: nowrap; }
.w-sketch { width: 306px; }
.w-create { width: 221px; }
.w-modify { width: 307px; }
.w-assemble { width: 92px; }
.w-construct { width: 94px; }
.w-inspect { width: 74px; }
.w-insert { width: 64px; }
.w-make { width: 59px; }
.w-addins { width: 74px; }
.w-select { width: 69px; }
.w-stop { width: 99px; padding-right: 4px; }
.w-stop::after { display: none; }
.ticons:has(.selbtn) { padding-top: 4px; }
.selbtn { width: 39px; height: 40px; background: #5788b4; }
.selic { width: 40px; height: 40px; }

.panel { position: absolute; left: 4px; width: 300px; display: flex; align-items: center; background: #cfcfcf; border: 1px solid #b0b0b0; color: #6e6e6e; font-size: 10px; }
.browser { top: 69px; height: 25px; }
.comments { bottom: 4px; height: 25px; }
.rew { position: absolute; left: 6px; font-size: 7px; letter-spacing: -1px; color: #333; font-family: "DejaVu Sans", sans-serif; }
.ptitle { margin-left: 26px; }
.pm { width: 10px; height: 10px; margin-left: auto; margin-right: 6px; }
.vgrip { width: 3px; height: 12px; border-left: 1px solid #777; margin-right: 2px; flex: none; }

.tree { position: absolute; left: 22px; top: 99px; display: flex; flex-direction: column; gap: 4px; font-size: 11px; color: #5c5c5c; }
.row { display: flex; align-items: center; height: 20px; padding-left: 18px; }
.rootrow { position: relative; }
.rootexp { position: absolute; left: -1px; top: 4px; width: 12px; height: 12px; }
.rootnode { display: flex; align-items: center; width: 172px; height: 20px; background: #bcbcbc; padding: 2px; }
.rootinner { width: 145px; height: 16px; background: #8e8e8e; display: flex; align-items: center; padding-left: 4px; }
.rootname { margin-left: 14px; color: #fff; font-weight: bold; font-size: 11.500px; white-space: nowrap; }
.rootinner .bulb { height: 18px; }
.cube { width: 15px; height: 16px; margin-left: 13px; }
.radio { width: 14px; height: 14px; margin-left: 4px; }
.exp { width: 10px; height: 14px; margin-right: 8px; flex: none; display: block; }
.node { display: flex; align-items: center; height: 20px; background: #bcbcbc; padding: 0 10px 0 3px; white-space: nowrap; letter-spacing: -.1px; box-shadow: 0 0 3px rgba(0,0,0,.12); }
.fold { width: 15px; height: 16px; }
.fold.nv { margin-right: 15px; }
.doc { width: 15px; height: 18px; margin-right: 15px; }
.bn { padding-left: 5px; }
.bulb { width: 11px; height: 19px; }
.bn .fold { margin-left: 12px; margin-right: 15px; }

.navbar { position: absolute; left: 837px; top: 880px; display: flex; gap: 7px; }
.navgroup { height: 24px; background: #c6c6c6; display: flex; align-items: center; padding-left: 3px; }
.ng1 { width: 145px; }
.ng2 { width: 93px; }
.nv-i { width: 19px; height: 19px; }
.gapf { margin-left: 6px; }
.gapl { margin-left: 8px; }
.gapm { margin-left: 6px; }
.gaps { margin-left: 3px; }

.viewcube { position: absolute; left: 1840px; top: 29px; width: 52px; height: 52px; background: #a5a5a4; display: flex; align-items: center; justify-content: center; }
.vcface { width: 34px; height: 34px; background: #9c9c9b; display: flex; align-items: center; justify-content: center; font: bold 13px "Liberation Sans", sans-serif; color: #767676; }

.palette { position: absolute; left: 1667px; top: 189px; width: 249px; height: 653px; background: #dedede; border: 1px solid #b0b0b0; display: flex; flex-direction: column; }
.phead { height: 24px; flex: none; background: #cfcfcf; border-bottom: 1px solid #a9a9a9; display: flex; align-items: center; padding-left: 2px; }
.pm2 { width: 10px; height: 10px; margin-left: 3px; }
.ptitle2 { margin-left: 5px; font-size: 10px; color: #727880; }
.ff { margin-left: auto; margin-right: 5px; font-size: 7px; letter-spacing: -1px; color: #333; font-family: "DejaVu Sans", sans-serif; }
.pbody { flex: 1; }
.psec { height: 26px; display: flex; align-items: center; font-size: 11px; font-weight: bold; color: #4d4d4d; padding-left: 2px; }
.tri { width: 12px; font-size: 9px; font-family: "DejaVu Sans", sans-serif; color: #333; font-weight: normal; }
.prow { height: 26px; display: flex; align-items: center; position: relative; padding-left: 9px; }
.plabel { width: 107px; font-size: 11px; color: #525d6a; white-space: nowrap; letter-spacing: -.05px; }
.pchk { width: 14px; height: 14px; margin-left: -1px; }
.pic { width: 18px; height: 18px; margin-left: -1px; }
.pfoot { height: 36px; flex: none; background: #d2d2d2; border-top: 1px solid #a9a9a9; display: flex; align-items: center; justify-content: flex-end; padding-right: 16px; }
.stopbtn { width: 73px; height: 21px; padding: 0; background: #e8e8e8; border: 1px solid #b8b8b8; font: 11.500px "Liberation Sans", sans-serif; color: #5f5f5f; }

.scrollstrip { height: 9px; flex: none; background: #d9d9d9; position: relative; border-left: 4px solid #c8c8c8; }
.thumb { position: absolute; left: 960px; width: 800px; top: 0; height: 9px; background: #909090; border-radius: 4px 4px 4px 4px; }

.timeline { height: 42px; flex: none; background: #cbcbcb; display: flex; position: relative; }
.controls { width: 141px; flex: none; display: flex; padding: 10px 0 0 10px; gap: 11px; background: #c8c8c8; }
.pc { width: 14px; height: 16px; }
.track { display: flex; height: 36px; border-bottom: 2px solid #777; align-self: flex-start; position: relative; width: 1723px; }
.dash { position: absolute; left: -4px; bottom: -2px; width: 11px; height: 2px; background: #cbcbcb; border-left: 3px solid #777; border-right: 3px solid #777; }
.t { width: 24px; flex: none; height: 34px; position: relative; padding: 7px 2px 0; }
.t::after { content: ""; position: absolute; left: 11.500px; bottom: 0; width: 1px; height: 5px; background: #666; }
.ti { width: 20px; height: 20px; margin-top: 1px; }
.t.current::before { content: ""; position: absolute; left: 0; top: 6px; width: 24px; height: 23px; background: #f14444; border-radius: 2px; }
.t.current .ti { position: relative; }
.marker { position: absolute; left: 1722px; top: 4px; width: 14px; height: 32px; }
.gear { width: 18px; height: 18px; position: absolute; left: 1894px; top: 9px; }
```
